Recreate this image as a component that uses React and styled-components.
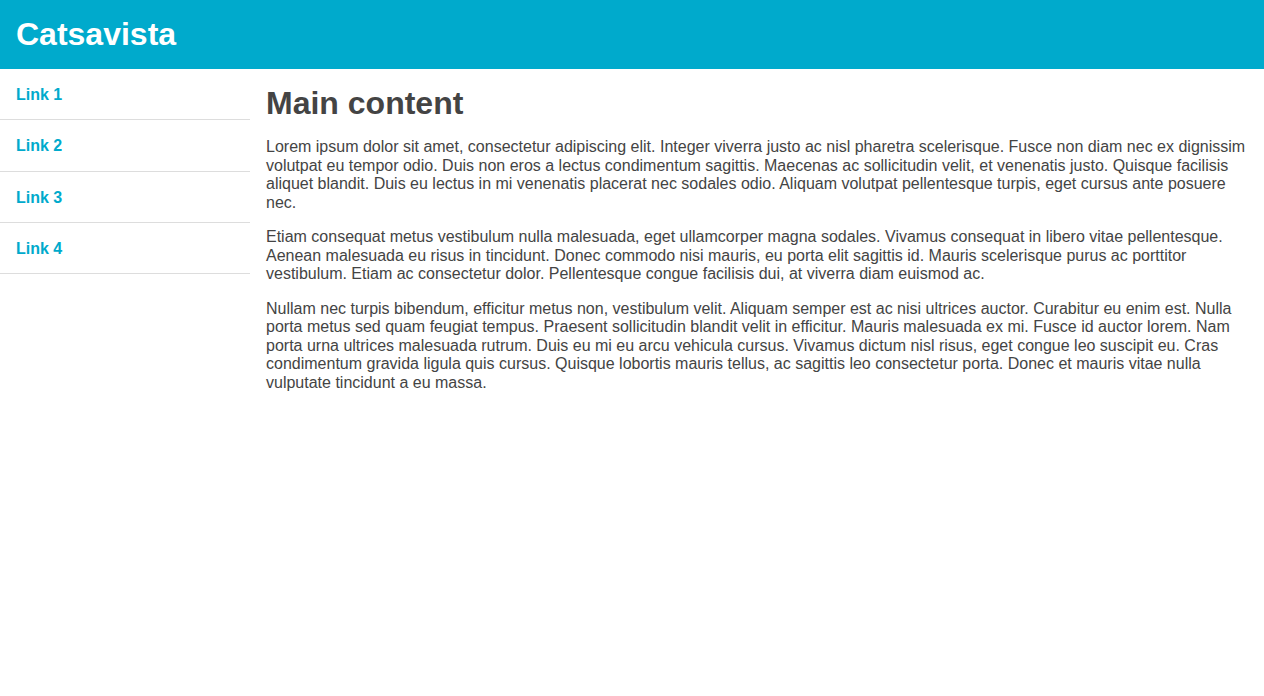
import React from "react";
import styled, { createGlobalStyle } from "styled-components";

const GlobalStyle = createGlobalStyle`
  body {
    margin: 0;
    font-family: "Liberation Sans", Arial, sans-serif;
    background: #fff;
    color: #444;
  }
`;

const Header = styled.header`
  background: #00aacc;
  height: 69px;
  padding: 0 16px;
  display: flex;
  align-items: center;
`;

const Brand = styled.h1`
  margin: 0;
  color: #fff;
  font-size: 32px;
  font-weight: bold;
`;

const Layout = styled.div`
  display: flex;
  align-items: flex-start;
`;

const Sidebar = styled.nav`
  width: 250px;
  flex-shrink: 0;
`;

const NavItem = styled.a`
  display: block;
  padding: 17px 16px 15px;
  line-height: 18.33px;
  border-bottom: 1px solid #dddddd;
  color: #00aacc;
  font-weight: bold;
  font-size: 16px;
  text-decoration: none;
`;

const Main = styled.main`
  flex: 1;
  padding: 16px 16px;
`;

const Title = styled.h1`
  margin: 0 0 16px;
  font-size: 32px;
  color: #444;
`;

const Para = styled.p`
  margin: 0 0 16px;
  font-size: 16px;
  line-height: 18.5px;
  color: #444;
`;

const links = ["Link 1", "Link 2", "Link 3", "Link 4"];

const paragraphs = [
  "Lorem ipsum dolor sit amet, consectetur adipiscing elit. Integer viverra justo ac nisl pharetra scelerisque. Fusce non diam nec ex dignissim volutpat eu tempor odio. Duis non eros a lectus condimentum sagittis. Maecenas ac sollicitudin velit, et venenatis justo. Quisque facilisis aliquet blandit. Duis eu lectus in mi venenatis placerat nec sodales odio. Aliquam volutpat pellentesque turpis, eget cursus ante posuere nec.",
  "Etiam consequat metus vestibulum nulla malesuada, eget ullamcorper magna sodales. Vivamus consequat in libero vitae pellentesque. Aenean malesuada eu risus in tincidunt. Donec commodo nisi mauris, eu porta elit sagittis id. Mauris scelerisque purus ac porttitor vestibulum. Etiam ac consectetur dolor. Pellentesque congue facilisis dui, at viverra diam euismod ac.",
  "Nullam nec turpis bibendum, efficitur metus non, vestibulum velit. Aliquam semper est ac nisi ultrices auctor. Curabitur eu enim est. Nulla porta metus sed quam feugiat tempus. Praesent sollicitudin blandit velit in efficitur. Mauris malesuada ex mi. Fusce id auctor lorem. Nam porta urna ultrices malesuada rutrum. Duis eu mi eu arcu vehicula cursus. Vivamus dictum nisl risus, eget congue leo suscipit eu. Cras condimentum gravida ligula quis cursus. Quisque lobortis mauris tellus, ac sagittis leo consectetur porta. Donec et mauris vitae nulla vulputate tincidunt a eu massa.",
];

export default function App() {
  return (
    <>
      <GlobalStyle />
      <Header>
        <Brand>Catsavista</Brand>
      </Header>
      <Layout>
        <Sidebar>
          {links.map((l) => (
            <NavItem key={l} href="#">
              {l}
            </NavItem>
          ))}
        </Sidebar>
        <Main>
          <Title>Main content</Title>
          {paragraphs.map((p, i) => (
            <Para key={i}>{p}</Para>
          ))}
        </Main>
      </Layout>
    </>
  );
}
